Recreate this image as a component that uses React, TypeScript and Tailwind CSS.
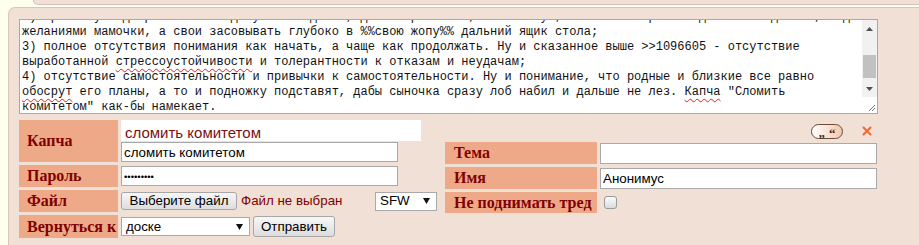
import { X } from "lucide-react";

const labelCls =
  "flex items-center whitespace-nowrap bg-[#eeaa88] pl-[8px] text-[16px] font-bold text-[#800000] [font-family:'Liberation_Serif',serif]";
const inputCls =
  "box-border h-[20px] w-[277px] border border-[#a9a9a9] bg-white px-[2px] text-[13.33px] text-black outline-none [font-family:'Liberation_Sans',Arial,sans-serif]";
const buttonCls =
  "box-border flex items-center justify-center rounded-[3px] border border-[#a6a6a6] bg-gradient-to-b from-[#f7f7f7] to-[#dddddd] text-[13.33px] text-black [font-family:'Liberation_Sans',Arial,sans-serif]";

function Squiggle({ children }: { children: React.ReactNode }) {
  return (
    <span className="underline decoration-[#e02020] decoration-wavy decoration-1 underline-offset-[3px]">
      {children}
    </span>
  );
}

function Triangle({ down }: { down?: boolean }) {
  return (
    <svg width="7" height="4" viewBox="0 0 7 4">
      <path d={down ? "M0 0H7L3.5 4Z" : "M0 4H7L3.5 0Z"} fill="#505050" />
    </svg>
  );
}

function Scrollbar() {
  return (
    <div className="flex w-[15px] flex-col bg-[#f1f1f1]">
      <div className="flex h-[17px] items-center justify-center">
        <Triangle />
      </div>
      <div className="h-[43px] px-[1px]">
        <div className="mt-[18px] h-[23px] bg-[#c1c1c1]" />
      </div>
      <div className="flex h-[17px] items-center justify-center">
        <Triangle down />
      </div>
      <div className="flex flex-1 items-end justify-end bg-white pb-[1px] pr-[1px]">
        <svg width="8" height="8" viewBox="0 0 8 8">
          <path d="M7 1L1 7M7 4L4 7" stroke="#777" strokeWidth="1" />
        </svg>
      </div>
    </div>
  );
}

function MessageBox() {
  return (
    <div className="box-border flex h-[95px] w-[859px] border border-[#a9a9a9] bg-white">
      <div className="flex-1 overflow-hidden pl-[2px] text-[12px] leading-[15px] text-[#111] [font-family:'Liberation_Mono','DejaVu_Sans_Mono',monospace]">
        <div className="-mt-[10px] whitespace-pre">
          <div>2) привычку подстраиваться под чужие ожидания, делать ровно то, что скажут, и свои интересы задвигать подальше, под</div>
          <div>желаниями мамочки, а свои засовывать глубоко в %%свою жопу%% дальний ящик стола;</div>
          <div>3) полное отсутствия понимания как начать, а чаще как продолжать. Ну и сказанное выше &gt;&gt;1096605 - отсутствие</div>
          <div>
            выработанной <Squiggle>стрессоустойчивости</Squiggle> и толерантности к отказам и неудачам;
          </div>
          <div>4) отсутствие самостоятельности и привычки к самостоятельности. Ну и понимание, что родные и близкие все равно</div>
          <div>
            <Squiggle>обосрут</Squiggle> его планы, а то и подножку подставят, дабы сыночка сразу лоб набил и дальше не лез. <Squiggle>Капча</Squiggle> "Сломить
          </div>
          <div>комитетом" как-бы намекает.</div>
        </div>
      </div>
      <Scrollbar />
    </div>
  );
}

function Dropdown({ value, width }: { value: string; width: string }) {
  return (
    <div
      className={`box-border flex h-[19px] items-center justify-between border border-[#a9a9a9] bg-white pl-[4px] pr-[6px] text-[13.33px] text-black [font-family:'Liberation_Sans',Arial,sans-serif] ${width}`}
    >
      <span>{value}</span>
      <svg width="7" height="6" viewBox="0 0 7 6">
        <path d="M0 0H7L3.5 6Z" fill="#111" />
      </svg>
    </div>
  );
}

export default function App() {
  return (
    <div className="min-h-[245px] overflow-hidden bg-[#ffffee]">
      <div className="ml-[33px] box-border h-[5px] rounded-bl-[6px] border-b border-l border-[#d9bfb7] bg-[#f0e0d6]" />
      <div className="ml-[8px] mt-[2px] rounded-tl-[7px] border-l border-t border-[#dcc4ba] bg-[#f0e0d6] pb-[12px] pl-[10px] pt-[11px]">
        <MessageBox />

        <form className="mt-[6px] flex" onSubmit={(e) => e.preventDefault()}>
          {/* left table */}
          <div className="flex w-[418px] flex-col gap-[3px]">
            <div className="flex h-[42px] gap-[3px]">
              <div className={`${labelCls} w-[99px]`}>Капча</div>
              <div className="flex flex-col">
                <div className="box-border h-[21px] w-[300px] overflow-hidden bg-white pl-[4px] pt-[2px] text-[15px] leading-[21px] text-[#7a1010] [font-family:'Liberation_Sans',Arial,sans-serif]">
                  сломить комитетом
                </div>
                <input className={`${inputCls} mt-[1px]`} defaultValue="сломить комитетом" />
              </div>
            </div>

            <div className="flex h-[22px] gap-[3px]">
              <div className={`${labelCls} w-[99px]`}>Пароль</div>
              <div className="flex items-center">
                <input type="password" className={`${inputCls} !text-[9.5px]`} defaultValue="123456789" />
              </div>
            </div>

            <div className="flex h-[22px] gap-[3px]">
              <div className={`${labelCls} w-[99px]`}>Файл</div>
              <div className="flex items-center">
                <button type="button" className={`${buttonCls} h-[18px] w-[116px]`}>
                  Выберите файл
                </button>
                <span className="ml-[4px] w-[134px] text-[13.33px] text-[#800000] [font-family:'Liberation_Sans',Arial,sans-serif]">
                  Файл не выбран
                </span>
                <Dropdown value="SFW" width="w-[62px]" />
              </div>
            </div>

            <div className="flex h-[23px] gap-[3px]">
              <div className={`${labelCls} w-[99px]`}>Вернуться к</div>
              <div className="flex items-center gap-[3px]">
                <Dropdown value="доске" width="w-[129px]" />
                <button type="submit" className={`${buttonCls} h-[21px] w-[82px]`}>
                  Отправить
                </button>
              </div>
            </div>
          </div>

          {/* right table */}
          <div className="ml-[8px] flex w-[432px] flex-col">
            <div className="flex h-[22px] items-center justify-end gap-[17px] pr-[3px]">
              <button
                type="button"
                className="box-border flex h-[15px] w-[32px] items-center justify-center gap-[4px] rounded-full border border-[#6b4a3a] bg-gradient-to-r from-white to-[#f3c6ae] text-[13px] font-bold leading-none text-[#3a2a22] [font-family:'Liberation_Serif',serif]"
              >
                <span className="translate-y-[1px]">„</span>
                <span className="translate-y-[2px]">“</span>
              </button>
              <X size={14} strokeWidth={3.5} className="text-[#ef6a36]" />
            </div>
            <div className="flex flex-col gap-[3px]">
              <div className="flex h-[22px] gap-[3px]">
                <div className={`${labelCls} w-[152px] pl-[9px]`}>Тема</div>
                <div className="flex items-center">
                  <input className={`${inputCls} h-[21px]`} />
                </div>
              </div>
              <div className="flex h-[22px] gap-[3px]">
                <div className={`${labelCls} w-[152px] pl-[9px]`}>Имя</div>
                <div className="flex items-center">
                  <input className={`${inputCls} h-[21px]`} defaultValue="Анонимус" />
                </div>
              </div>
              <div className="flex h-[21px] gap-[3px]">
                <div className={`${labelCls} w-[152px] pl-[9px]`}>Не поднимать тред</div>
                <div className="flex items-center pl-[4px]">
                  <span className="box-border h-[13px] w-[13px] rounded-[3px] border border-[#9a9a9a] bg-gradient-to-b from-[#fbfbfb] to-[#d8dbe0]" />
                </div>
              </div>
            </div>
          </div>
        </form>
      </div>
    </div>
  );
}
